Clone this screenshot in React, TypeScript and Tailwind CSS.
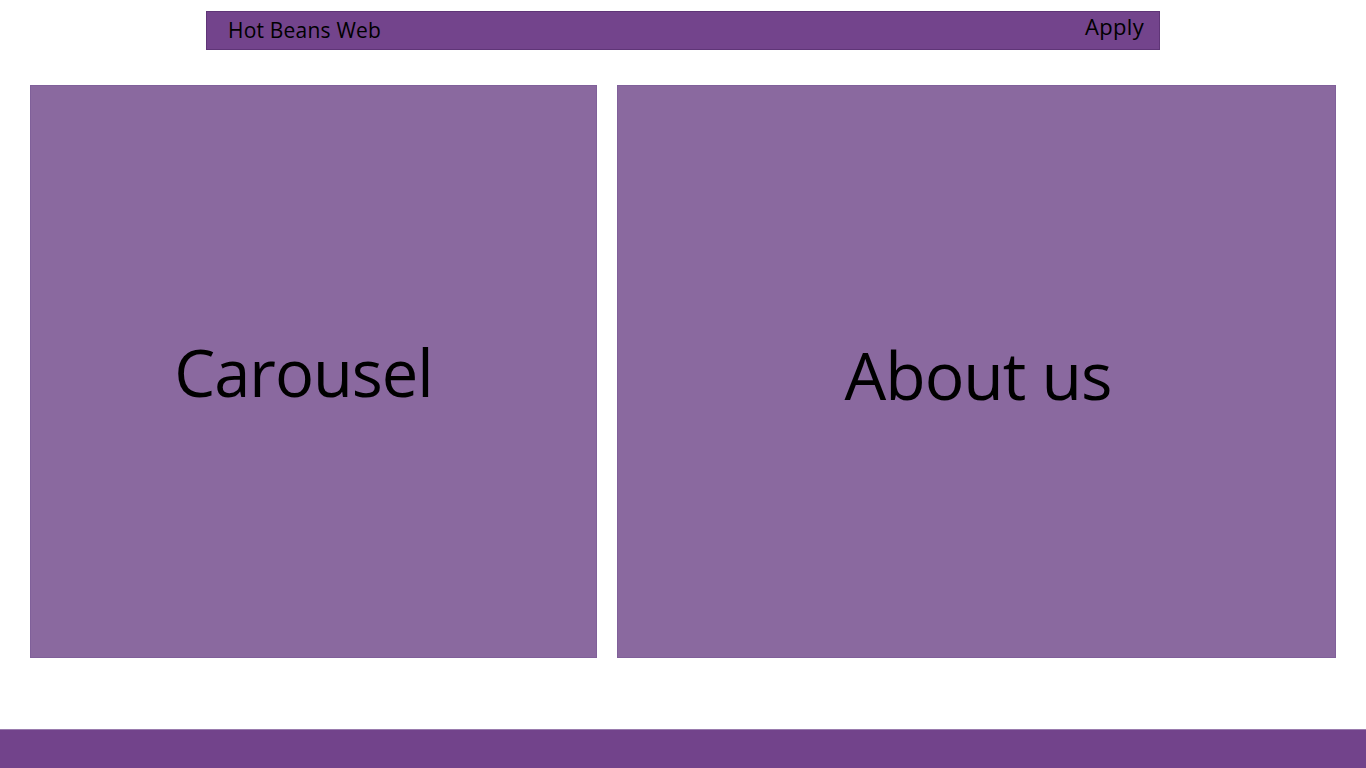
export default function App() {
  const font = { fontFamily: '"Open Sans", "Noto Sans", sans-serif' };
  return (
    <div className="min-h-[768px] w-full bg-white flex flex-col" style={font}>
      <div className="pt-[11px] flex justify-center">
        <div className="w-[954px] h-[39px] bg-[#73448c] border border-[#5f3577] flex items-start justify-between pl-[21px] pr-[15px]">
          <span className="text-[21px] leading-none text-black mt-[8px] tracking-[0.2px]">Hot Beans Web</span>
          <span className="text-[22px] leading-none text-black mt-[3px] tracking-[0.3px]">Apply</span>
        </div>
      </div>
      <div className="flex gap-[20px] pl-[30px] pr-[30px] mt-[35px]">
        <div className="w-[567px] h-[573px] bg-[#8a699f] border border-[#80609a] flex items-center justify-center">
          <span className="text-[65px] leading-none text-black -ml-[20px] mt-[2px] tracking-[-1px]">Carousel</span>
        </div>
        <div className="flex-1 h-[573px] bg-[#8a699f] border border-[#80609a] flex items-center justify-center">
          <span className="text-[66px] leading-none text-black mt-[4px] ml-[3px] tracking-[-1px]">About us</span>
        </div>
      </div>
      <div className="mt-[71px] h-[39px] bg-[#72438b] border-t border-[#9a7cae]" />
    </div>
  );
}
